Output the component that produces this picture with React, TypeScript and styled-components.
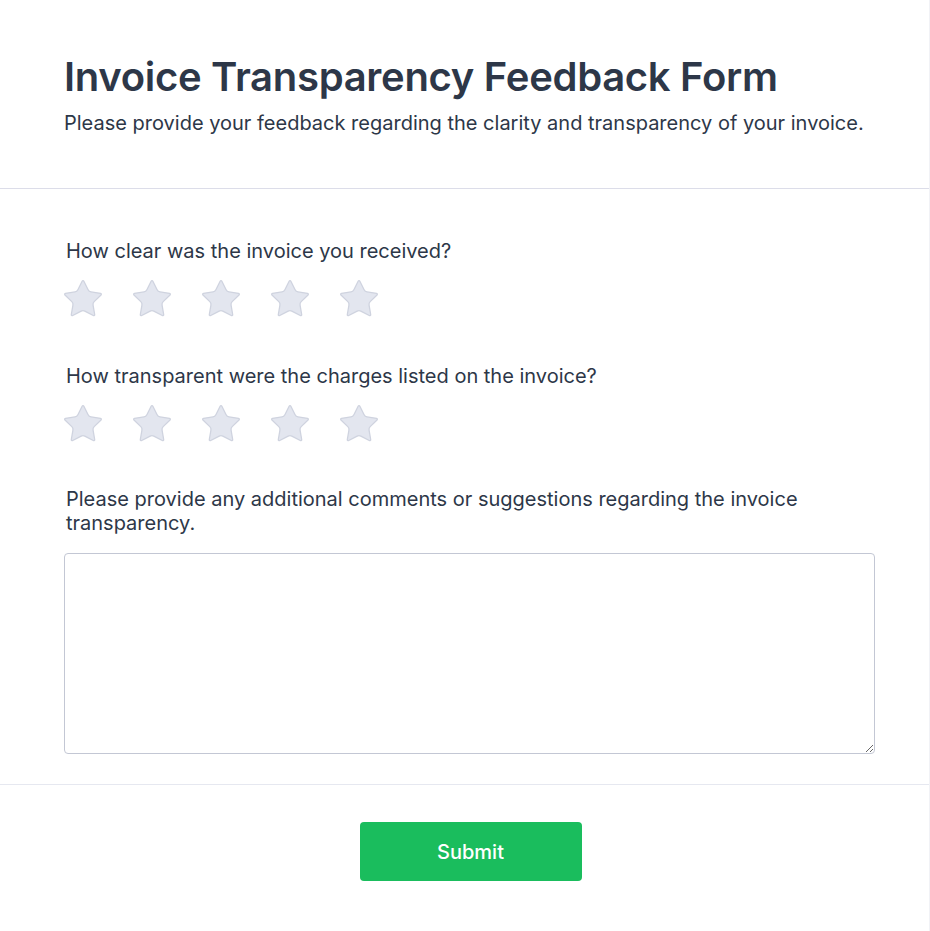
import React from "react";
import styled, { createGlobalStyle } from "styled-components";
import { Star } from "lucide-react";

const Global = createGlobalStyle`
  html, body { margin: 0; padding: 0; background: #ffffff; }
  body { font-family: Inter, "Noto Sans", sans-serif; color: #2d3748; }
  * { box-sizing: border-box; }
`;

const Card = styled.div`
  width: 930px;
  min-height: 931px;
  background: #fff;
  border-right: 1px solid #f1f2f6;
`;

const Header = styled.header`
  padding: 53px 64px 51px;
  border-bottom: 1px solid #dcdde9;
`;

const Title = styled.h1`
  margin: 0;
  font-size: 40px;
  line-height: 48px;
  font-weight: 600;
  color: #2d3748;
  letter-spacing: -0.3px;
`;

const Subtitle = styled.p`
  margin: 8px 0 0;
  font-size: 20px;
  line-height: 28px;
  font-weight: 400;
  color: #2d3748;
`;

const Form = styled.form`
  padding: 50px 54px 30px 64px;
  border-bottom: 1px solid #e6e8f0;
`;

const Question = styled.div<{ $after?: number }>`
  margin-bottom: ${(p) => p.$after ?? 0}px;
`;

const Label = styled.label`
  display: block;
  padding-left: 2px;
  font-size: 20px;
  line-height: 24px;
  font-weight: 400;
  color: #2d3748;
`;

const Stars = styled.div`
  display: flex;
  gap: 25px;
  margin-top: 14px;
  margin-left: -3px;
`;

const StarButton = styled.button`
  border: 0;
  background: none;
  padding: 0;
  display: flex;
  cursor: pointer;
`;

const TextArea = styled.textarea`
  display: block;
  width: 100%;
  height: 201px;
  margin-top: 18px;
  border: 1px solid #c3c7d4;
  border-radius: 4px;
  font-family: inherit;
  font-size: 16px;
  padding: 8px 12px;
  resize: vertical;
`;

const Footer = styled.div`
  display: flex;
  justify-content: center;
  padding: 37px 0 50px;
`;

const Submit = styled.button`
  width: 222px;
  height: 59px;
  margin-left: 12px;
  border: 0;
  border-radius: 4px;
  background: #1abd5d;
  color: #fff;
  font-family: inherit;
  font-size: 20px;
  font-weight: 500;
  cursor: pointer;
`;

const StarRow: React.FC = () => (
  <Stars>
    {[0, 1, 2, 3, 4].map((i) => (
      <StarButton key={i} type="button" aria-label={`${i + 1} star`}>
        <Star size={44} fill="#e3e6ef" color="#cfd3df" strokeWidth={0.7} />
      </StarButton>
    ))}
  </Stars>
);

export default function App() {
  return (
    <Card>
      <Global />
      <Header>
        <Title>Invoice Transparency Feedback Form</Title>
        <Subtitle>Please provide your feedback regarding the clarity and transparency of your invoice.</Subtitle>
      </Header>
      <Form onSubmit={(e) => e.preventDefault()}>
        <Question $after={43}>
          <Label>How clear was the invoice you received?</Label>
          <StarRow />
        </Question>
        <Question $after={41}>
          <Label>How transparent were the charges listed on the invoice?</Label>
          <StarRow />
        </Question>
        <Question>
          <Label>Please provide any additional comments or suggestions regarding the invoice transparency.</Label>
          <TextArea />
        </Question>
      </Form>
      <Footer>
        <Submit type="button">Submit</Submit>
      </Footer>
    </Card>
  );
}
